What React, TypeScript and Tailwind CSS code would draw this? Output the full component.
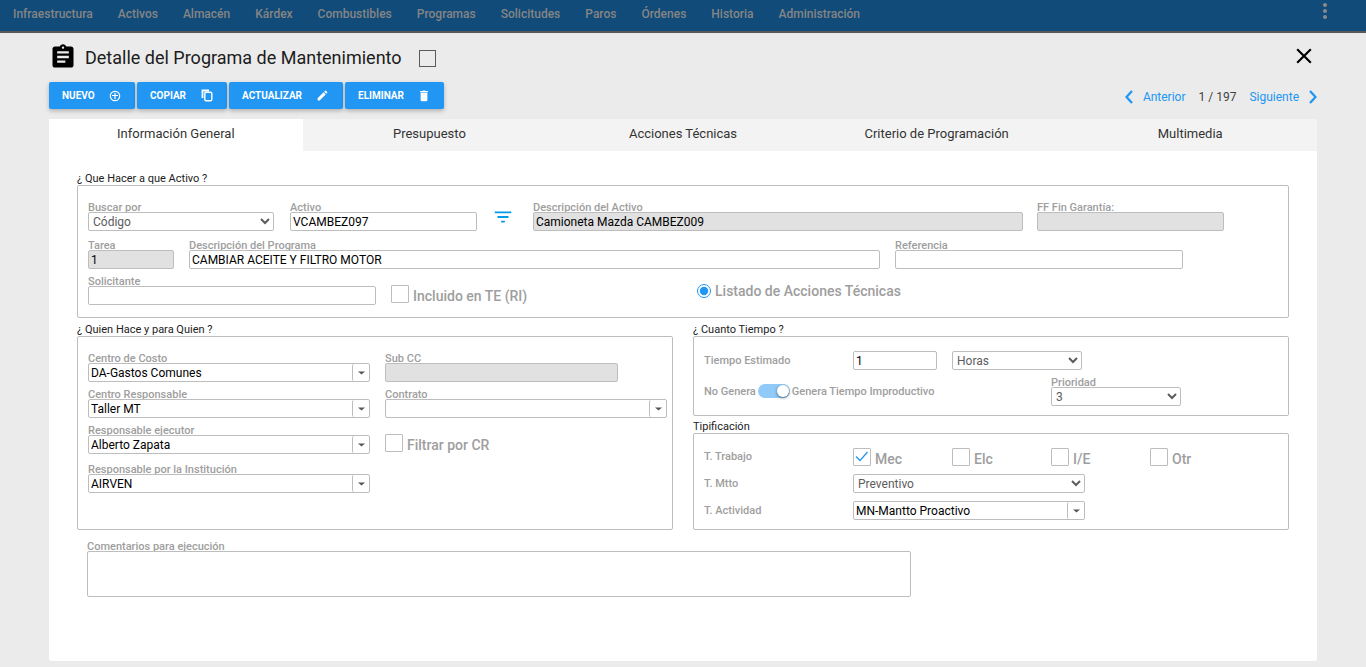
import React from "react";
import {
  MdAssignment,
  MdClose,
  MdEdit,
  MdFilterList,
  MdMoreVert,
} from "react-icons/md";

const menu = [
  "Infraestructura",
  "Activos",
  "Almacén",
  "Kárdex",
  "Combustibles",
  "Programas",
  "Solicitudes",
  "Paros",
  "Órdenes",
  "Historia",
  "Administración",
];

const tabs = [
  "Información General",
  "Presupuesto",
  "Acciones Técnicas",
  "Criterio de Programación",
  "Multimedia",
];

const labelText = "text-[11px] leading-[13px] font-medium text-[#9e9e9e]";
const boxBase = "h-[19px] w-full rounded-[2px] border border-[#bdbdbd] text-xs outline-none";

type FieldProps = { id: string; label: string; className?: string; children: React.ReactNode };

function Field({ id, label, className = "", children }: FieldProps) {
  return (
    <div className={`flex min-w-0 flex-col ${className}`}>
      <label htmlFor={id} className={`-mb-[2px] whitespace-nowrap ${labelText}`}>
        {label}
      </label>
      {children}
    </div>
  );
}

function TextBox({ id, value = "", disabled = false }: { id: string; value?: string; disabled?: boolean }) {
  return (
    <input
      id={id}
      type="text"
      defaultValue={value}
      disabled={disabled}
      className={`${boxBase} px-[2px] text-black disabled:bg-[#e1e1e1]`}
    />
  );
}

function Select({ id, value, options = [] }: { id: string; value: string; options?: string[] }) {
  return (
    <select id={id} defaultValue={value} className={`${boxBase} text-[#5c5c5c]`}>
      {[value, ...options].map((o) => (
        <option key={o}>{o}</option>
      ))}
    </select>
  );
}

function Combo({ id, value = "" }: { id: string; value?: string }) {
  return (
    <div className="flex h-[19px] w-full rounded-[2px] border border-[#bdbdbd]">
      <input
        id={id}
        type="text"
        role="combobox"
        aria-expanded="false"
        defaultValue={value}
        className="min-w-0 flex-1 px-[2px] text-xs text-black outline-none"
      />
      <button
        type="button"
        aria-label="Desplegar"
        className="flex w-[17px] items-center justify-center rounded-[2px] border-l border-[#bdbdbd]"
      >
        <svg width="7" height="4" viewBox="0 0 7 4" fill="#555">
          <path d="M0 0.5h7L3.5 3.5z" />
        </svg>
      </button>
    </div>
  );
}

function Check({ id, label, checked = false }: { id: string; label: string; checked?: boolean }) {
  return (
    <div className="flex items-start gap-1">
      <span className="grid size-[18px] shrink-0">
        <input
          id={id}
          type="checkbox"
          defaultChecked={checked}
          className="peer col-start-1 row-start-1 size-[18px] appearance-none rounded-[1px] border border-[#bdbdbd]"
        />
        <svg
          viewBox="0 0 18 18"
          className="pointer-events-none invisible col-start-1 row-start-1 size-[18px] peer-checked:visible"
          fill="none"
          stroke="#2196f3"
          strokeWidth="1.2"
        >
          <path d="M3 8.5l4 4L14.5 4" />
        </svg>
      </span>
      <label htmlFor={id} className="text-sm leading-[22px] font-medium whitespace-nowrap text-[#9e9e9e]">
        {label}
      </label>
    </div>
  );
}

function Section({ title, className = "", children }: { title: string; className?: string; children: React.ReactNode }) {
  return (
    <section className="flex flex-1 flex-col">
      <h2 className="-mb-[2px] text-[11px] leading-4 text-[#212121]">{title}</h2>
      <div className={`flex-1 rounded-[2px] border border-[#bdbdbd] pl-[10px] ${className}`}>{children}</div>
    </section>
  );
}

function Action({ label, icon, className = "" }: { label: string; icon: React.ReactNode; className?: string }) {
  return (
    <button
      type="button"
      className={`flex h-[27px] items-center justify-between rounded-[2px] bg-[#2196f3] px-[14px] pl-[13px] text-[10px] font-bold text-white shadow-[0_2px_4px_rgba(0,0,0,0.25)] ${className}`}
    >
      {label}
      {icon}
    </button>
  );
}

function CirclePlusIcon() {
  return (
    <svg width="12" height="12" viewBox="0 0 12 12" fill="none" stroke="currentColor" strokeWidth="1.2">
      <circle cx="6" cy="6" r="4.7" />
      <path d="M6 3v6M3 5.5h6" />
    </svg>
  );
}

function CopyIcon() {
  return (
    <svg width="12" height="13" viewBox="0 0 12 13" fill="none" stroke="currentColor">
      <path d="M1.5 9V1.5H8" strokeWidth="1.8" />
      <rect x="3.8" y="3.2" width="7" height="8.6" rx="1.2" strokeWidth="1.4" />
    </svg>
  );
}

function TrashIcon() {
  return (
    <svg width="12" height="12" viewBox="0 0 12 12" fill="currentColor">
      <path d="M2 2V1h2.5l.5-.6h2l.5.6H10v1zM2.6 2.6h6.8V10a1.3 1.3 0 0 1-1.3 1.3H3.9A1.3 1.3 0 0 1 2.6 10z" />
    </svg>
  );
}

function Chevron({ d }: { d: string }) {
  return (
    <svg width="8" height="14" viewBox="0 0 8 14" fill="none" stroke="currentColor" strokeWidth="2.3">
      <path d={d} />
    </svg>
  );
}

export default function App() {
  return (
    <div className="flex min-h-screen flex-col bg-[#ebebeb] font-[Roboto,sans-serif]">
      <nav className="flex h-[33px] items-start border-b-2 border-[#595959] bg-[#114b79] pr-[29px] pl-[13px]">
        <div className="flex flex-1 gap-[25px] pt-[6px]">
          {menu.map((m) => (
            <a key={m} href="#" className="text-xs leading-4 font-medium text-[#858585]">
              {m}
            </a>
          ))}
        </div>
        <button type="button" aria-label="Más opciones" className="-mt-px text-[#8a8a8a]">
          <MdMoreVert size={24} />
        </button>
      </nav>

      <header className="flex items-start px-[49px] pt-[10px]">
        <MdAssignment size={28} />
        <h1 className="ml-2 text-lg leading-[30px] text-[#1c1c1c]">Detalle del Programa de Mantenimiento</h1>
        <input
          type="checkbox"
          aria-label="Seleccionar programa"
          className="mt-[7px] ml-[17px] size-[17px] appearance-none border border-[#5a5a5a]"
        />
        <button type="button" aria-label="Cerrar" className="ml-auto">
          <MdClose size={26} />
        </button>
      </header>

      <div className="flex items-start justify-between px-[49px] pt-[9px]">
        <div className="flex gap-[2px]">
          <Action label="NUEVO" icon={<CirclePlusIcon />} className="w-[86px]" />
          <Action label="COPIAR" icon={<CopyIcon />} className="w-[90px]" />
          <Action label="ACTUALIZAR" icon={<MdEdit size={13} />} className="w-[114px]" />
          <Action label="ELIMINAR" icon={<TrashIcon />} className="w-[99px]" />
        </div>
        <div className="flex h-[29px] items-center text-xs text-[#424242]">
          <a href="#" className="flex items-center gap-[10px] text-[#2196f3]">
            <Chevron d="M7 1L1.5 7L7 13" />
            Anterior
          </a>
          <span className="mx-[13px]">1 / 197</span>
          <a href="#" className="flex items-center gap-[10px] text-[#2196f3]">
            Siguiente
            <Chevron d="M1 1L6.5 7L1 13" />
          </a>
        </div>
      </div>

      <main className="mx-[49px] mt-2 mb-[6px] flex flex-1 flex-col rounded-[2px] bg-white">
        <div role="tablist" className="grid grid-cols-5 rounded-t-[2px] bg-[#f3f3f3]">
          {tabs.map((t, i) => (
            <button
              key={t}
              type="button"
              role="tab"
              aria-selected={i === 0}
              className="h-8 pb-[2px] text-[13px] text-[#333] aria-selected:bg-white"
            >
              {t}
            </button>
          ))}
        </div>

        <form className="px-7 pt-5">
          <Section title="¿ Que Hacer a que Activo ?" className="pt-[15px] pb-[10px]">
            <div className="grid grid-cols-[202fr_243fr_504fr_251fr]">
              <Field id="buscar" label="Buscar por" className="pr-4">
                <Select id="buscar" value="Código" options={["Descripción"]} />
              </Field>
              <div className="flex items-end gap-[15px] pr-[19px]">
                <Field id="activo" label="Activo" className="flex-1">
                  <TextBox id="activo" value="VCAMBEZ097" />
                </Field>
                <button type="button" aria-label="Filtrar activos" className="mb-[3px] text-[#039be5]">
                  <MdFilterList size={22} />
                </button>
              </div>
              <Field id="desc-activo" label="Descripción del Activo" className="pr-[14px]">
                <TextBox id="desc-activo" value="Camioneta Mazda CAMBEZ009" disabled />
              </Field>
              <Field id="garantia" label="FF Fin Garantía:" className="pr-16">
                <TextBox id="garantia" disabled />
              </Field>
            </div>
            <div className="mt-2 grid grid-cols-[101fr_706fr_393fr]">
              <Field id="tarea" label="Tarea" className="pr-[15px]">
                <TextBox id="tarea" value="1" disabled />
              </Field>
              <Field id="desc-programa" label="Descripción del Programa" className="pr-[15px]">
                <TextBox id="desc-programa" value="CAMBIAR ACEITE Y FILTRO MOTOR" />
              </Field>
              <Field id="referencia" label="Referencia" className="pr-[105px]">
                <TextBox id="referencia" />
              </Field>
            </div>
            <div className="mt-[6px] grid grid-cols-[303fr_306fr_591fr]">
              <Field id="solicitante" label="Solicitante" className="pr-[15px]">
                <TextBox id="solicitante" />
              </Field>
              <div className="pt-[10px]">
                <Check id="incluido" label="Incluido en TE (RI)" />
              </div>
              <div className="flex items-center gap-1">
                <input id="listado" type="radio" name="listado" defaultChecked className="size-[14px] accent-[#2196f3]" />
                <label htmlFor="listado" className="text-sm font-medium text-[#9e9e9e]">
                  Listado de Acciones Técnicas
                </label>
              </div>
            </div>
          </Section>

          <div className="mt-1 grid grid-cols-2 gap-5">
            <Section title="¿ Quien Hace y para Quien ?" className="grid grid-cols-[297fr_287fr] pt-[15px]">
              <div className="flex flex-col pr-[15px]">
                <Field id="costo" label="Centro de Costo">
                  <Combo id="costo" value="DA-Gastos Comunes" />
                </Field>
                <Field id="responsable" label="Centro Responsable" className="mt-[6px]">
                  <Combo id="responsable" value="Taller MT" />
                </Field>
                <Field id="ejecutor" label="Responsable ejecutor" className="mt-[6px]">
                  <Combo id="ejecutor" value="Alberto Zapata" />
                </Field>
                <Field id="institucion" label="Responsable por la Institución" className="mt-[9px]">
                  <Combo id="institucion" value="AIRVEN" />
                </Field>
              </div>
              <div className="flex flex-col pr-[5px]">
                <Field id="subcc" label="Sub CC" className="pr-[49px]">
                  <TextBox id="subcc" disabled />
                </Field>
                <Field id="contrato" label="Contrato" className="mt-[6px]">
                  <Combo id="contrato" />
                </Field>
                <div className="mt-4">
                  <Check id="filtrar" label="Filtrar por CR" />
                </div>
              </div>
            </Section>

            <div className="flex flex-col gap-[3px]">
              <Section title="¿ Cuanto Tiempo ?" className="pt-[14px] pb-[9px]">
                <div className="grid grid-cols-[149fr_99fr_99fr_99fr_138fr] items-center">
                  <label htmlFor="tiempo" className={labelText}>
                    Tiempo Estimado
                  </label>
                  <div className="flex pr-[15px]">
                    <TextBox id="tiempo" value="1" />
                  </div>
                  <div className="col-span-2 flex pr-[68px]">
                    <select
                      aria-label="Unidad de tiempo"
                      defaultValue="Horas"
                      className={`${boxBase} text-[#5c5c5c]`}
                    >
                      <option>Horas</option>
                      <option>Días</option>
                    </select>
                  </div>
                </div>
                <div className="mt-[6px] grid grid-cols-[347fr_237fr] items-center">
                  <div className="flex items-center gap-[2px]">
                    <span className={labelText}>No Genera</span>
                    <input
                      id="improductivo"
                      type="checkbox"
                      role="switch"
                      defaultChecked
                      className="flex h-[14px] w-8 appearance-none items-center rounded-full bg-[#90caf9] px-px before:size-3 before:rounded-full before:bg-white before:shadow-[0_1px_3px_rgba(0,0,0,0.5)] checked:justify-end"
                    />
                    <label htmlFor="improductivo" className={labelText}>
                      Genera Tiempo Improductivo
                    </label>
                  </div>
                  <Field id="prioridad" label="Prioridad" className="pr-[107px]">
                    <Select id="prioridad" value="3" options={["1", "2"]} />
                  </Field>
                </div>
              </Section>

              <Section title="Tipificación" className="pt-[14px] pb-[9px]">
                <div className="grid grid-cols-[149fr_99fr_99fr_99fr_138fr]">
                  <span className={`pt-[2px] ${labelText}`}>T. Trabajo</span>
                  <Check id="mec" label="Mec" checked />
                  <Check id="elc" label="Elc" />
                  <Check id="ie" label="I/E" />
                  <Check id="otr" label="Otr" />
                </div>
                <div className="mt-1 grid grid-cols-[149fr_435fr] items-center gap-y-2">
                  <label htmlFor="mtto" className={labelText}>
                    T. Mtto
                  </label>
                  <div className="flex pr-[203px]">
                    <Select id="mtto" value="Preventivo" options={["Correctivo"]} />
                  </div>
                  <label htmlFor="actividad" className={labelText}>
                    T. Actividad
                  </label>
                  <div className="pr-[203px]">
                    <Combo id="actividad" value="MN-Mantto Proactivo" />
                  </div>
                </div>
              </Section>
            </div>
          </div>

          <div className="mt-[10px] grid grid-cols-[824fr_378fr] pl-[10px]">
            <Field id="comentarios" label="Comentarios para ejecución">
              <textarea
                id="comentarios"
                className="h-[46px] w-full resize-none rounded-[2px] border border-[#bdbdbd] px-1 text-xs outline-none"
              />
            </Field>
          </div>
        </form>
      </main>
    </div>
  );
}
